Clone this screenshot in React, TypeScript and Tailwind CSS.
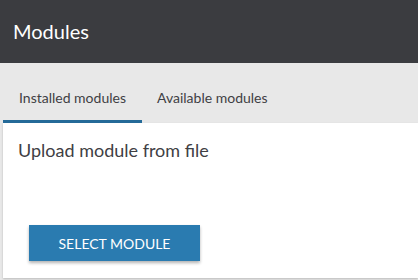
export default function App() {
  return (
    <div className="w-[418px] h-[280px] bg-[#e8e8e8] overflow-hidden font-['Lato',sans-serif]">
      <header className="h-[63px] bg-[#3b3c40] flex items-center px-[13px] pb-[2px]">
        <h1 className="text-white text-[20px] leading-none">Modules</h1>
      </header>

      <nav className="flex pl-[3px] pt-[17px]">
        <button
          type="button"
          className="w-[139px] h-[43px] pb-[5px] text-[14px] text-[#3f4044] border-b-[3px] border-[#246a98]"
        >
          Installed modules
        </button>
        <button type="button" className="px-[15px] h-[43px] pb-[8px] text-[14px] text-[#3f4044]">
          Available modules
        </button>
      </nav>

      <section className="ml-[3px] h-[155px] bg-white shadow-[0_1px_2px_rgba(0,0,0,0.2)] pl-[15px] pt-[15px]">
        <p className="text-[18px] leading-[24px] text-[#3f4044]">Upload module from file</p>
        <button
          type="button"
          className="mt-[63px] ml-[11px] w-[171px] h-[36px] bg-[#2a7bb0] text-white text-[14px] uppercase shadow-[0_2px_3px_rgba(0,0,0,0.3)]"
        >
          Select module
        </button>
      </section>
    </div>
  )
}
